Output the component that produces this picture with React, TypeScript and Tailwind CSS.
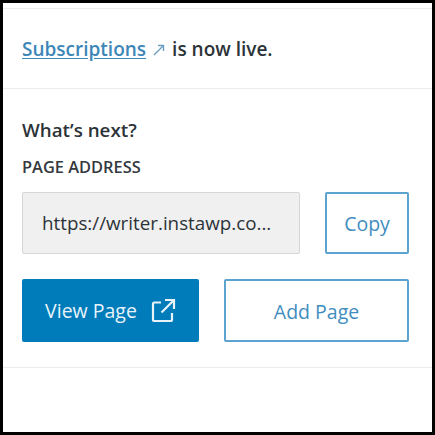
const FONT = "font-['Open_Sans','Noto_Sans',sans-serif]";

const ExternalIcon = () => (
  <svg width="26" height="26" viewBox="0 0 26 26" fill="none" stroke="currentColor" strokeWidth="2.2" aria-hidden="true">
    <path d="M11 4.5H4.5A1.5 1.5 0 0 0 3 6v15.5A1.5 1.5 0 0 0 4.5 23h16a1.5 1.5 0 0 0 1.5-1.5V15" />
    <path d="M11.5 14.5 23.5 2.5M15 2h9v9" />
  </svg>
);

export default function App() {
  return (
    <div className={`${FONT} h-[435px] w-[435px] overflow-hidden border-[3px] border-black bg-white text-[#2c3338]`}>
      <div className="mt-[5px] flex h-[81px] items-center gap-[6px] border-y border-[#ececec] pt-[2px] pl-[19px] text-[19px] font-semibold">
        <a className="text-[#3d86b8] underline underline-offset-2">Subscriptions</a>
        <svg width="14" height="14" viewBox="0 0 14 14" fill="none" stroke="#6f9fc0" strokeWidth="1.4" aria-hidden="true">
          <path d="M2 12 11.5 2.5M6 2.5h5.5V8" />
        </svg>
        <span>is now live.</span>
      </div>

      <div className="flex h-[279px] flex-col border-b border-[#ececec] px-[19px]">
        <h2 className="mt-[28px] text-[18.8px] leading-[26px] font-semibold">What’s next?</h2>
        <label className="mt-[12px] text-[16.4px] leading-[24px] font-semibold text-[#33393e]">PAGE ADDRESS</label>

        <div className="mt-[13px] flex gap-[25px]">
          <div className="flex h-[62px] w-[278px] items-center rounded-[2px] border border-[#d6d6d6] bg-[#f0f0f0] pt-[1px] pl-[19px] text-[18.8px]">
            https://writer.instawp.co...
          </div>
          <button className="h-[62px] w-[84px] rounded-[2px] border-2 border-[#5da3cf] pt-[2px] text-[19.5px] text-[#3f8dbf]">Copy</button>
        </div>

        <div className="mt-[25px] flex gap-[25px]">
          <button className="flex h-[63px] w-[177px] items-center justify-center gap-[13px] rounded-[2px] bg-[#007cba] pt-[1px] text-[19.5px] text-[#e8f3f9]">
            View Page
            <ExternalIcon />
          </button>
          <button className="h-[63px] w-[185px] rounded-[2px] border-2 border-[#5da3cf] pt-[2px] text-[19.5px] text-[#3f8dbf]">Add Page</button>
        </div>
      </div>
    </div>
  );
}
